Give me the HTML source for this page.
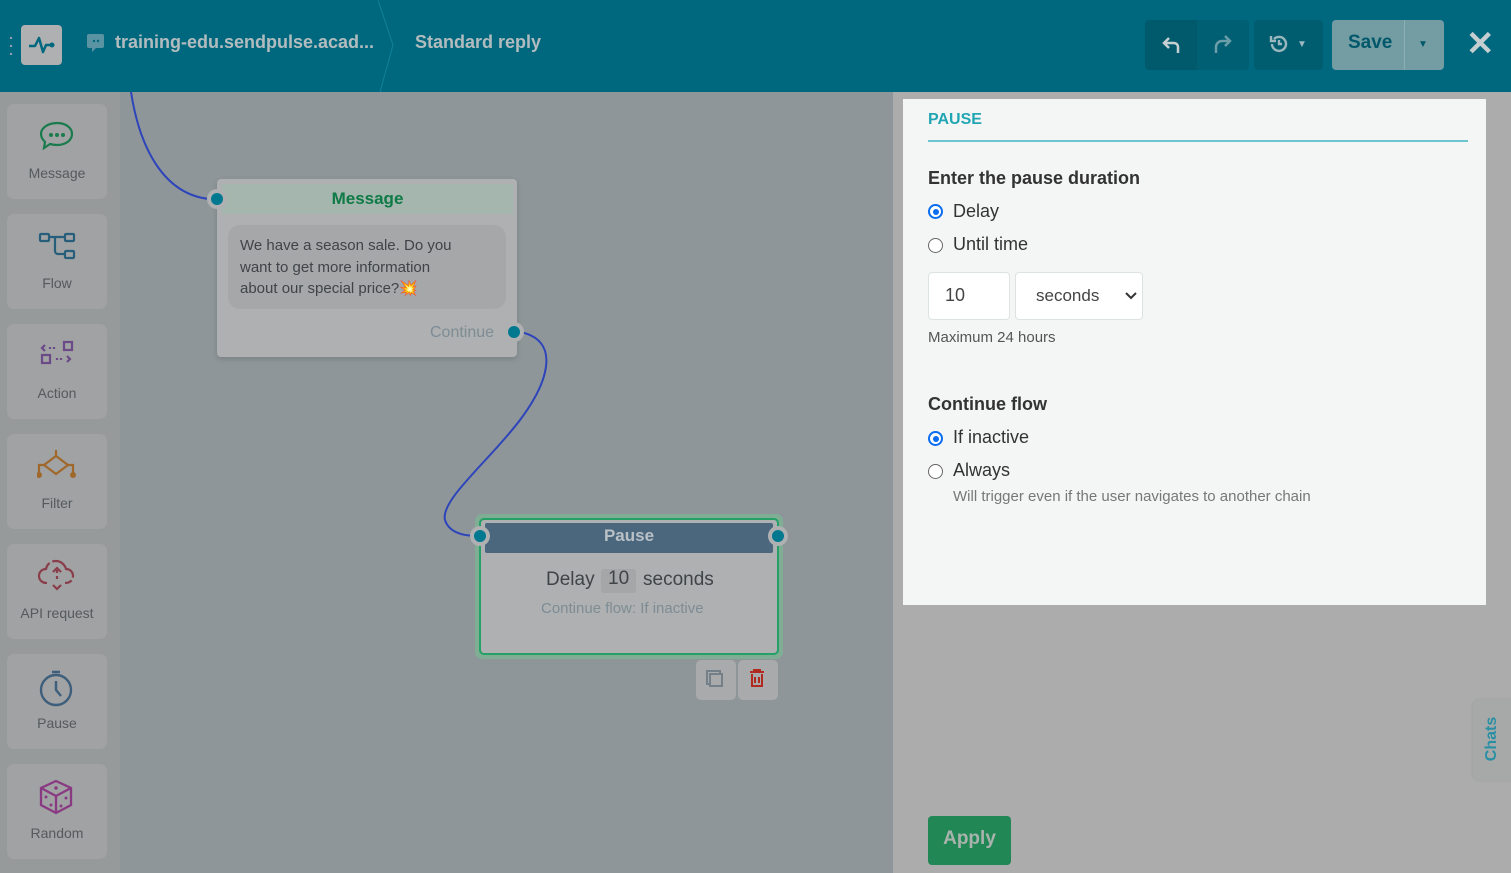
<!DOCTYPE html>
<html><head><meta charset="utf-8"><style>
*{box-sizing:border-box;margin:0;padding:0}
body{width:1511px;height:873px;overflow:hidden;font-family:"Liberation Sans",sans-serif;background:#8e9699;position:relative}
.top{position:absolute;left:0;top:0;width:1511px;height:92px;background:#00687e}
.abs{position:absolute}
.side{position:absolute;left:0;top:92px;width:120px;height:781px;background:#979a9b}
.card{position:absolute;left:7px;width:100px;height:95px;background:#a0a2a3;border-radius:7px;text-align:center;color:#555a5c;font-size:14px}
.card svg{position:absolute;left:30px;top:15px}
.card span{position:absolute;left:0;right:0;top:61px}
.right{position:absolute;left:893px;top:92px;width:618px;height:781px;background:#abacab}
.panel{position:absolute;left:903px;top:99px;width:583px;height:506px;background:#f4f6f5}
.radio{position:absolute;width:15px;height:15px;border-radius:50%;border:1.5px solid #666;background:#fff}
.radio.on{border:2px solid #0a6cf0}
.radio.on::after{content:"";position:absolute;left:2.5px;top:2.5px;width:6px;height:6px;border-radius:50%;background:#0a6cf0}
.t{position:absolute;white-space:nowrap}
.dot{position:absolute;width:20px;height:20px;border-radius:50%;background:#aeb0b1}
.dot::after{content:"";position:absolute;left:4px;top:4px;width:12px;height:12px;border-radius:50%;background:#00788f}
</style></head><body>
<div class="top">
 <div class="t" style="left:8px;top:33px;color:#aab;font-size:18px;line-height:8px">·<br>·<br>·</div>
 <div class="abs" style="left:21px;top:25px;width:41px;height:40px;background:#aeb0b1;border-radius:4px">
  <svg width="41" height="40"><path d="M8 21h6l4-8 4 14 3-7h6" fill="none" stroke="#00687e" stroke-width="2.5" stroke-linejoin="round"/><circle cx="31" cy="20" r="2.5" fill="#00687e"/></svg></div>
 <svg class="abs" style="left:86px;top:33px" width="20" height="20"><path d="M3 1h13a2 2 0 0 1 2 2v10a2 2 0 0 1-2 2H10l-4 4v-4H3a2 2 0 0 1-2-2V3a2 2 0 0 1 2-2z" fill="#5a93a2"/><circle cx="8" cy="8" r="1.2" fill="#00687e"/><circle cx="12" cy="8" r="1.2" fill="#00687e"/></svg>
 <div class="t" style="left:115px;top:32px;color:#b2bcbe;font-size:18px;font-weight:bold">training-edu.sendpulse.acad...</div>
 <svg class="abs" style="left:378px;top:0" width="30" height="92"><path d="M0 0L15 45L2 92" fill="none" stroke="#11809a" stroke-width="1"/></svg>
 <div class="t" style="left:415px;top:32px;color:#b2bcbe;font-size:18px;font-weight:bold">Standard reply</div>
 <div class="abs" style="left:1145px;top:20px;width:52px;height:50px;background:#005a6c;border-radius:4px 0 0 4px"></div>
 <div class="abs" style="left:1197px;top:20px;width:52px;height:50px;background:#005f72;border-radius:0 4px 4px 0"></div>
 <svg class="abs" style="left:1160px;top:33px" width="24" height="24"><path d="M18 20v-6a4 4 0 0 0-4-4H5M9 5L4 10l5 5" fill="none" stroke="#c6cfd1" stroke-width="2.5"/></svg>
 <svg class="abs" style="left:1212px;top:33px" width="24" height="24"><path d="M4 20v-6a6 6 0 0 1 6-6h8M13 3l5 5-5 5" fill="none" stroke="#6a9ea8" stroke-width="2.5"/></svg>
 <div class="abs" style="left:1254px;top:20px;width:69px;height:50px;background:#005d70;border-radius:4px"></div>
 <svg class="abs" style="left:1268px;top:33px" width="22" height="22"><path d="M4 11a7 7 0 1 0 2-5M3 3v5h5M11 7v4h3" fill="none" stroke="#9ab8be" stroke-width="2.4"/></svg>
 <div class="t" style="left:1297px;top:39px;color:#9ab8be;font-size:10px">▼</div>
 <div class="abs" style="left:1332px;top:20px;width:112px;height:50px;background:#749da3;border-radius:4px"></div>
 <div class="abs" style="left:1404px;top:20px;width:1px;height:50px;background:#8cafb4"></div>
 <div class="t" style="left:1348px;top:32px;color:#00586a;font-size:19px;font-weight:bold">Save</div>
 <div class="t" style="left:1418px;top:39px;color:#00586a;font-size:10px">▼</div>
 <div class="t" style="left:1466px;top:24px;color:#c4cdcf;font-size:34px;font-weight:bold">✕</div>
</div>
<div class="side">
 <div class="card" style="top:12px"><svg width="40" height="36"><path d="M20 4c9 0 15 5 15 11s-6 11-15 11c-3 0-5-.5-7-1l-6 4 1-6c-2-2-4-5-4-8 0-6 7-11 16-11z" fill="none" stroke="#1a7b4c" stroke-width="2.2"/><circle cx="14" cy="16" r="2" fill="#1a7b4c"/><circle cx="20" cy="16" r="2" fill="#1a7b4c"/><circle cx="26" cy="16" r="2" fill="#1a7b4c"/></svg><span>Message</span></div>
 <div class="card" style="top:122px"><svg width="40" height="36"><g fill="none" stroke="#275e7c" stroke-width="2.2"><rect x="3" y="5" width="9" height="7" rx="1"/><rect x="28" y="5" width="9" height="7" rx="1"/><rect x="28" y="22" width="9" height="7" rx="1"/><path d="M12 8h16M18 8v14a3 3 0 0 0 3 3h7"/></g></svg><span>Flow</span></div>
 <div class="card" style="top:232px"><svg width="40" height="36"><g fill="none" stroke="#6c4a88" stroke-width="2.2"><path d="M8 6l-3 3 3 3M13 8v2M17 8v2"/><rect x="27" y="3" width="8" height="8"/><rect x="5" y="16" width="8" height="8"/><path d="M20 19v2M24 19v2M30 17l3 3-3 3"/></g></svg><span>Action</span></div>
 <div class="card" style="top:342px"><svg width="40" height="36"><g fill="none" stroke="#a0682a" stroke-width="2.2"><path d="M19 1v6M19 7l-12 9 12 9 12-9zM7 16h-5v8M31 16h5v8"/></g><circle cx="2" cy="26" r="3" fill="#a0682a"/><circle cx="36" cy="26" r="3" fill="#a0682a"/></svg><span>Filter</span></div>
 <div class="card" style="top:452px"><svg width="40" height="36"><g fill="none" stroke="#8a3d4a" stroke-width="2.2"><path d="M10 24c-5 0-8-3-8-7s3-7 7-7c1-5 5-8 10-8s9 4 10 8c4 0 7 3 7 7s-3 7-8 7" stroke-dasharray="30 3"/><path d="M20 11v3M20 17v3M16 13l4-4 4 4M16 26l4 4 4-4"/></g></svg><span>API request</span></div>
 <div class="card" style="top:562px"><svg width="40" height="38"><g fill="none" stroke="#3e5f7c" stroke-width="2.4"><circle cx="19" cy="21" r="15"/><path d="M19 12v9l5 6M15 3h8"/></g></svg><span>Pause</span></div>
 <div class="card" style="top:672px"><svg width="40" height="38"><g fill="none" stroke="#8a3a82" stroke-width="2.3"><path d="M19 2l15 7v17l-15 8-15-8V9z M4 9l15 8 15-8M19 17v17"/></g><g fill="#8a3a82"><circle cx="19" cy="9" r="1.7"/><circle cx="9" cy="18" r="1.5"/><circle cx="14" cy="26" r="1.5"/><circle cx="24" cy="27" r="1.5"/><circle cx="29" cy="19" r="1.5"/></g></svg><span>Random</span></div>
</div>
<svg class="abs" style="left:0;top:0" width="893" height="873"><g fill="none" stroke="#2d44bb" stroke-width="2"><path d="M131 92C140 150 165 195 210 199"/><path d="M520 332C560 340 550 380 520 420S440 500 445 520Q450 536 478 536"/></g></svg>
<div class="abs" style="left:217px;top:179px;width:300px;height:178px;background:#aeb0b1;border-radius:4px;box-shadow:0 2px 6px rgba(0,0,0,.15)"></div>
<div class="abs" style="left:222px;top:184px;width:291px;height:30px;background:#a4b6ae"></div>
<div class="t" style="left:222px;width:291px;text-align:center;top:189px;color:#0e7a45;font-size:17px;font-weight:bold">Message</div>
<div class="abs" style="left:228px;top:225px;width:278px;height:84px;background:#a5a7a8;border-radius:12px"></div>
<div class="t" style="left:240px;top:235px;color:#3f4448;font-size:15px;line-height:21.5px">We have a season sale. Do you<br>want to get more information<br>about our special price?💥</div>
<div class="t" style="left:430px;top:324px;color:#7e8c95;font-size:16px">Continue</div>
<div class="dot" style="left:207px;top:189px"></div>
<div class="dot" style="left:504px;top:322px"></div>
<div class="abs" style="left:475px;top:514px;width:308px;height:145px;border-radius:7px;background:#7fae95"></div>
<div class="abs" style="left:479px;top:518px;width:300px;height:137px;border-radius:5px;background:#aeb0b1;border:2.5px solid #25a066"></div>
<div class="abs" style="left:485px;top:523px;width:288px;height:30px;background:#4a677e;border-radius:2px"></div>
<div class="t" style="left:485px;width:288px;text-align:center;top:526px;color:#b9c0c6;font-size:17px;font-weight:bold">Pause</div>
<div class="abs" style="left:601px;top:569px;width:35px;height:24px;background:#a4a6a7;border-radius:3px"></div>
<div class="t" style="left:546px;top:569px;color:#3f4448;font-size:19px">Delay</div>
<div class="t" style="left:608px;top:568px;color:#3f4448;font-size:19px">10</div>
<div class="t" style="left:643px;top:569px;color:#3f4448;font-size:19px">seconds</div>
<div class="t" style="left:541px;top:600px;color:#7e8c95;font-size:15px">Continue flow: If inactive</div>
<div class="dot" style="left:470px;top:526px"></div>
<div class="dot" style="left:768px;top:526px"></div>
<div class="abs" style="left:696px;top:660px;width:40px;height:40px;background:#a8aaab;border-radius:5px"></div>
<div class="abs" style="left:738px;top:660px;width:40px;height:40px;background:#a8aaab;border-radius:5px"></div>
<svg class="abs" style="left:696px;top:660px" width="84" height="40"><g fill="none" stroke-width="2"><rect x="11" y="11" width="13" height="13" stroke="#73808a"/><rect x="14" y="14" width="12" height="12" stroke="#73808a" fill="#a8aaab"/><path d="M54 12h14M58 12v-2h6v2M56 14v12h10V14M59 17v6M63 17v6" stroke="#b02a20"/></g></svg>
<div class="right"></div>
<div class="panel"></div>
<div class="t" style="left:928px;top:111px;color:#22a6b3;font-size:16px;font-weight:bold">PAUSE</div>
<div class="abs" style="left:928px;top:140px;width:540px;height:2px;background:#6cc6cf"></div>
<div class="t" style="left:928px;top:168px;color:#333;font-size:18px;font-weight:bold">Enter the pause duration</div>
<div class="radio on" style="left:928px;top:204px"></div>
<div class="t" style="left:953px;top:201px;color:#333;font-size:18px">Delay</div>
<div class="radio" style="left:928px;top:238px"></div>
<div class="t" style="left:953px;top:234px;color:#333;font-size:18px">Until time</div>
<div class="abs" style="left:928px;top:272px;width:82px;height:48px;background:#fff;border:1px solid #dde2e2;border-radius:4px"></div>
<div class="t" style="left:945px;top:285px;color:#444;font-size:18px">10</div>
<div class="abs" style="left:1015px;top:272px;width:128px;height:48px;background:#fff;border:1px solid #dde2e2;border-radius:4px"></div>
<div class="t" style="left:1036px;top:286px;color:#444;font-size:17px">seconds</div>
<svg class="abs" style="left:1124px;top:291px" width="14" height="10"><path d="M2 2l5 5 5-5" fill="none" stroke="#333" stroke-width="2"/></svg>
<div class="t" style="left:928px;top:329px;color:#555;font-size:15px">Maximum 24 hours</div>
<div class="t" style="left:928px;top:394px;color:#333;font-size:18px;font-weight:bold">Continue flow</div>
<div class="radio on" style="left:928px;top:431px"></div>
<div class="t" style="left:953px;top:427px;color:#333;font-size:18px">If inactive</div>
<div class="radio" style="left:928px;top:464px"></div>
<div class="t" style="left:953px;top:460px;color:#333;font-size:18px">Always</div>
<div class="t" style="left:953px;top:488px;color:#777;font-size:15px">Will trigger even if the user navigates to another chain</div>
<div class="abs" style="left:928px;top:816px;width:83px;height:49px;background:#218855;border-radius:4px"></div>
<div class="t" style="left:928px;width:83px;text-align:center;top:828px;color:#a9b3ad;font-size:19px;font-weight:bold">Apply</div>
<div class="abs" style="left:1473px;top:700px;width:45px;height:80px;background:#a7a9a9;border-radius:7px;box-shadow:0 0 3px rgba(0,0,0,.1)"></div>
<div class="t" style="left:1470px;top:730px;color:#2a8fa3;font-size:16px;font-weight:bold;transform:rotate(-90deg);transform-origin:center">Chats</div>
</body></html>
